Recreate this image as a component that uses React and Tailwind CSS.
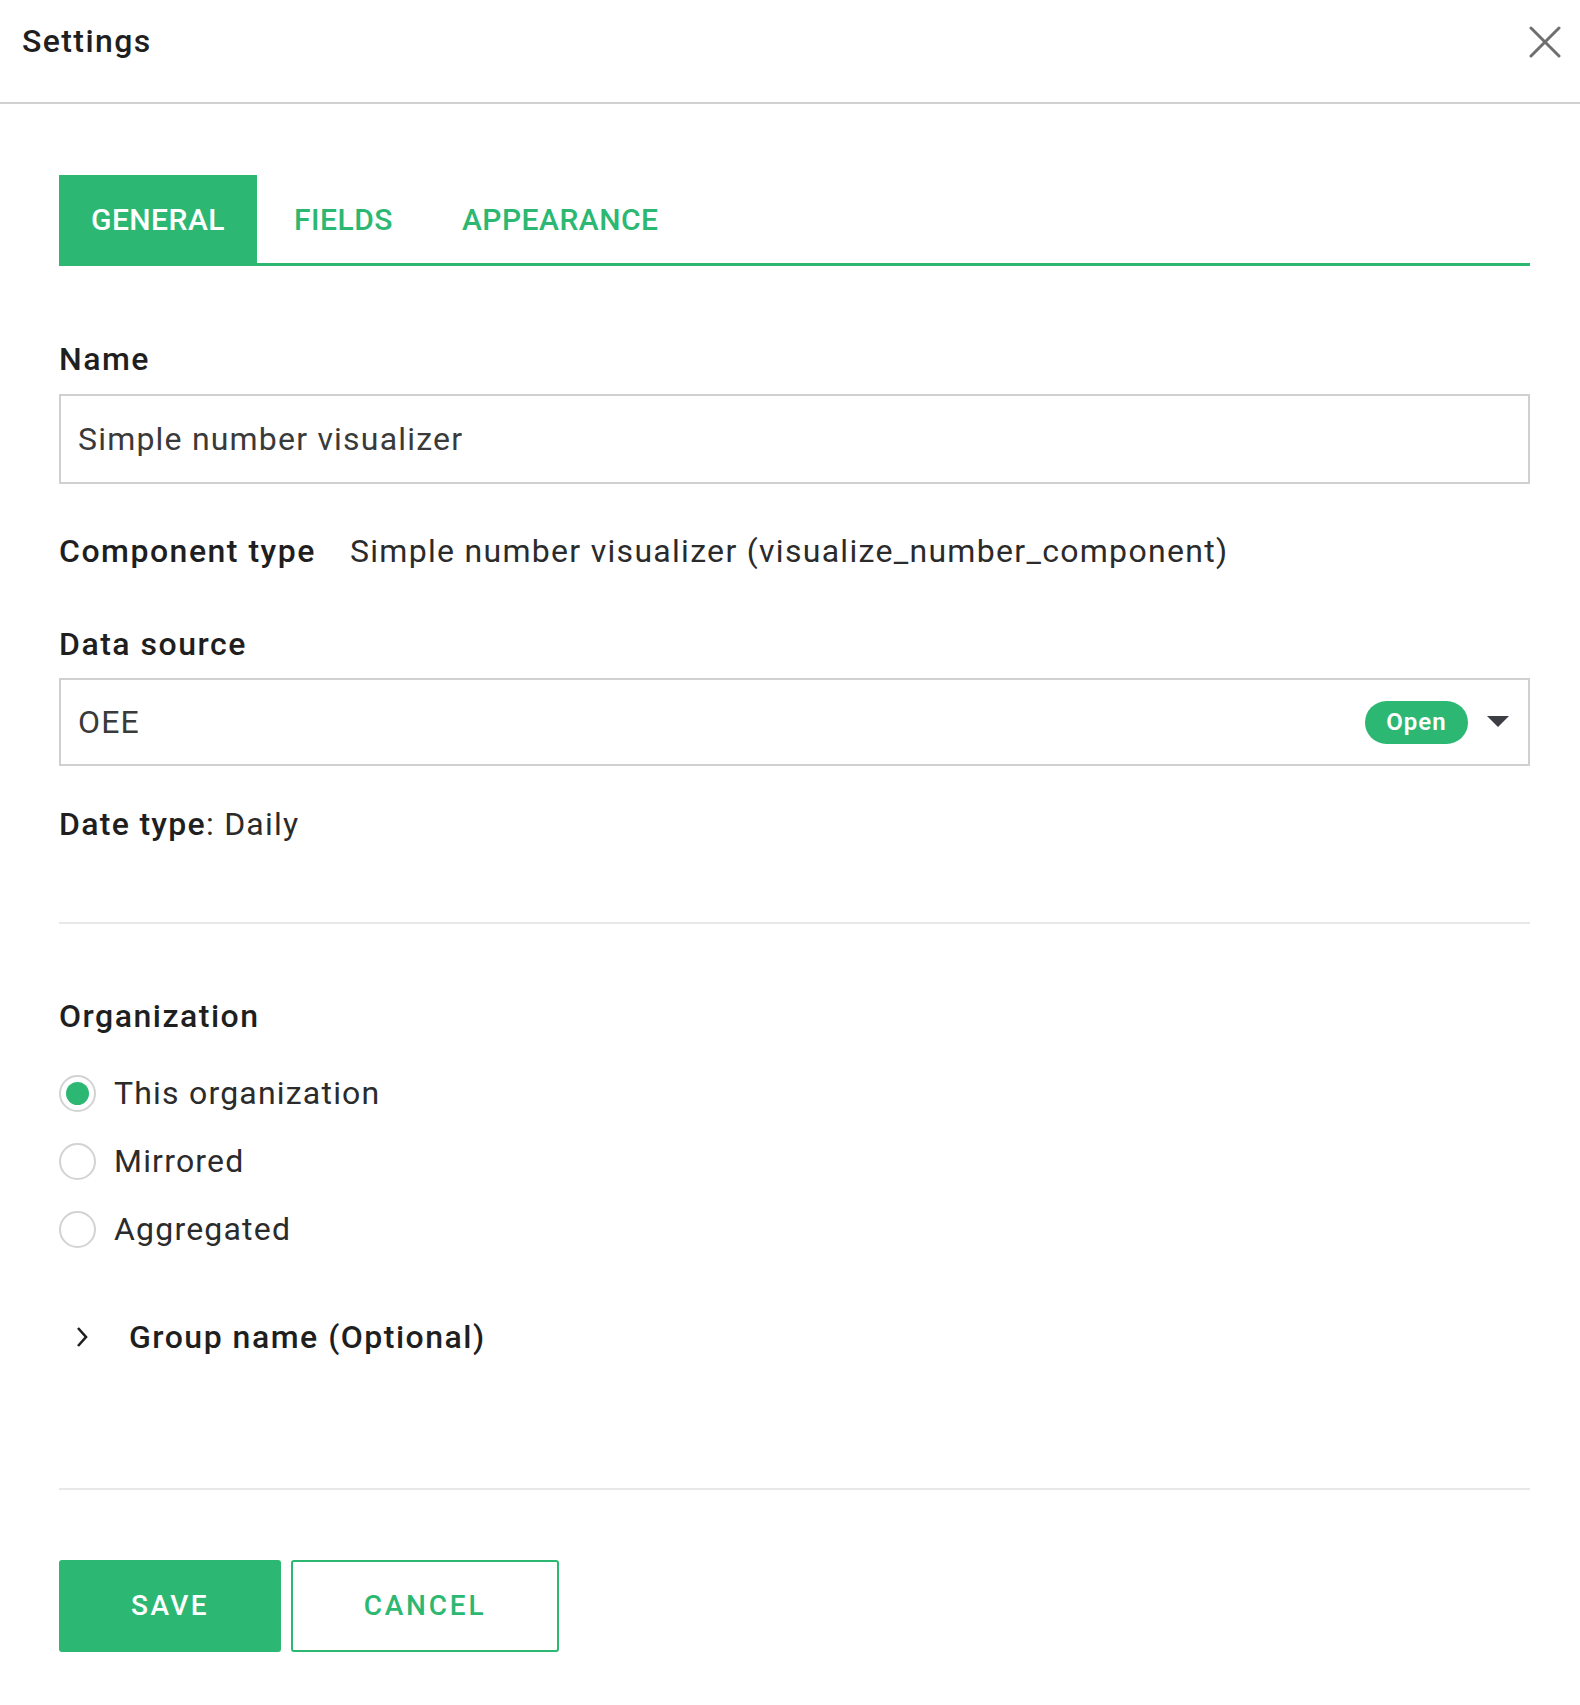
import React, { useState } from 'react';

function Radio({ checked, label, onClick }) {
  return (
    <div className="flex items-center h-[68px] cursor-pointer" onClick={onClick}>
      <div className="w-[37px] h-[37px] rounded-full border-2 border-[#d3d3d3] flex items-center justify-center bg-white">
        {checked && <div className="w-[23px] h-[23px] rounded-full bg-[#2cb872]" />}
      </div>
      <span className="ml-[18px] text-[32px] tracking-[1.2px] text-[#2b2b2b] leading-[40px]">{label}</span>
    </div>
  );
}

export default function App() {
  const [tab, setTab] = useState('general');
  const [org, setOrg] = useState('this');
  const [name, setName] = useState('Simple number visualizer');

  return (
    <div className="w-[1580px] h-[1705px] bg-white" style={{ fontFamily: 'Roboto, "Liberation Sans", sans-serif' }}>
      {/* header */}
      <div className="h-[104px] border-b-2 border-[#d0d0d0] flex justify-between items-start pl-[22px] pr-[17px] pt-[21px]">
        <h1 className="text-[32px] leading-[40px] font-medium tracking-[1.4px] text-[#1f1f1f]">Settings</h1>
        <button className="mt-[5px] w-[36px] h-[32px] flex items-center justify-center">
          <svg width="34" height="32" viewBox="0 0 34 32" fill="none" stroke="#6f6f6f" strokeWidth="3" strokeLinecap="round">
            <line x1="3" y1="2" x2="31" y2="30" />
            <line x1="31" y1="2" x2="3" y2="30" />
          </svg>
        </button>
      </div>

      <div className="pl-[59px] pr-[50px]">
        {/* tabs */}
        <div className="mt-[71px] h-[91px] border-b-[3px] border-[#2cb872] flex items-stretch">
          <button
            onClick={() => setTab('general')}
            className={`w-[198px] flex items-center justify-center text-[30px] font-medium tracking-[0.5px] ${tab === 'general' ? 'bg-[#2cb872] text-white' : 'text-[#2cb872]'}`}
          >
            GENERAL
          </button>
          <button
            onClick={() => setTab('fields')}
            className={`ml-[35px] px-[2px] flex items-center text-[30px] font-medium tracking-[0.5px] ${tab === 'fields' ? 'bg-[#2cb872] text-white' : 'text-[#2cb872]'}`}
          >
            FIELDS
          </button>
          <button
            onClick={() => setTab('appearance')}
            className={`ml-[65px] px-[2px] flex items-center text-[30px] font-medium tracking-[0.5px] ${tab === 'appearance' ? 'bg-[#2cb872] text-white' : 'text-[#2cb872]'}`}
          >
            APPEARANCE
          </button>
        </div>

        {/* name */}
        <div className="mt-[73px] text-[32px] leading-[40px] font-medium tracking-[1.5px] text-[#1f1f1f]">Name</div>
        <input
          value={name}
          onChange={e => setName(e.target.value)}
          className="mt-[15px] w-full h-[90px] border-2 border-[#d0d0d0] px-[17px] text-[32px] tracking-[1.2px] text-[#3a3a3a] outline-none"
        />

        {/* component type */}
        <div className="mt-[47px] flex items-center leading-[40px]">
          <span className="text-[32px] font-medium tracking-[1.5px] text-[#1f1f1f]">Component type</span>
          <span className="ml-[34px] text-[32px] tracking-[1.3px] text-[#2b2b2b]">Simple number visualizer (visualize_number_component)</span>
        </div>

        {/* data source */}
        <div className="mt-[53px] text-[32px] leading-[40px] font-medium tracking-[1.5px] text-[#1f1f1f]">Data source</div>
        <div className="mt-[14px] h-[88px] border-2 border-[#d0d0d0] flex items-center pl-[17px] pr-[19px]">
          <span className="flex-1 text-[32px] tracking-[1.2px] text-[#3a3a3a]">OEE</span>
          <span className="h-[43px] w-[103px] rounded-full bg-[#2cb872] text-white text-[24px] font-semibold tracking-[1px] flex items-center justify-center">Open</span>
          <svg className="ml-[19px]" width="22" height="12" viewBox="0 0 22 12">
            <path d="M0 0 H22 L11 11 Z" fill="#3d3d45" />
          </svg>
        </div>

        <div className="mt-[38px] leading-[40px] text-[32px] tracking-[1.2px] text-[#2b2b2b]">
          <span className="font-medium tracking-[1.3px] text-[#1f1f1f]">Date type</span>: Daily
        </div>

        <div className="mt-[78px] h-[2px] bg-[#e8e8e8]" />

        {/* organization */}
        <div className="mt-[72px] text-[32px] leading-[40px] font-medium tracking-[1.5px] text-[#1f1f1f]">Organization</div>
        <div className="mt-[23px]">
          <Radio checked={org === 'this'} label="This organization" onClick={() => setOrg('this')} />
          <Radio checked={org === 'mirrored'} label="Mirrored" onClick={() => setOrg('mirrored')} />
          <Radio checked={org === 'aggregated'} label="Aggregated" onClick={() => setOrg('aggregated')} />
        </div>

        <div className="mt-[54px] h-[40px] flex items-center">
          <svg className="ml-[16px]" width="14" height="22" viewBox="0 0 14 22" fill="none" stroke="#1f1f1f" strokeWidth="2.6">
            <path d="M3 2 L11 11 L3 20" />
          </svg>
          <span className="ml-[40px] text-[32px] font-medium tracking-[1.5px] text-[#1f1f1f]">Group name (Optional)</span>
        </div>

        <div className="mt-[131px] h-[2px] bg-[#e8e8e8]" />

        {/* buttons */}
        <div className="mt-[70px] flex gap-[10px]">
          <button className="w-[222px] h-[92px] rounded-[3px] bg-[#2cb872] text-white text-[28px] font-medium tracking-[2.4px]">SAVE</button>
          <button className="w-[268px] h-[92px] rounded-[3px] border-2 border-[#2cb872] bg-white text-[#2cb872] text-[28px] font-medium tracking-[2.8px]">CANCEL</button>
        </div>
      </div>
    </div>
  );
}
